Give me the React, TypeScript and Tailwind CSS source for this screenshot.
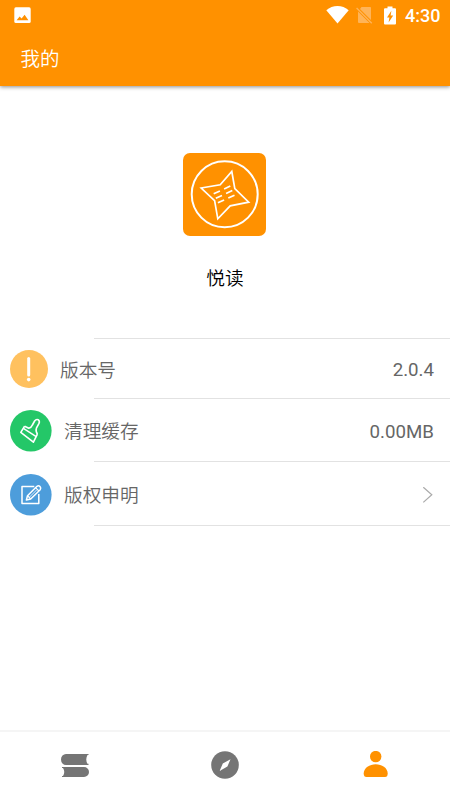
import type { ReactNode } from "react";

function StatusBar() {
  return (
    <div className="flex h-8 items-center pl-[14px] pr-[10px] text-white">
      <svg width="17" height="17" viewBox="0 0 17 17" className="mt-[-2px]">
        <rect x="0.3" y="0.3" width="16.4" height="15.7" rx="1.6" fill="#fff" />
        <path d="M2.6 13.2 5.6 9.4 7.6 11.6 10.6 7.8 14.4 13.2Z" fill="#ff9100" />
      </svg>
      <div className="ml-auto flex items-center">
        <svg width="23" height="19" viewBox="0 0 23 19" className="mt-[-3px]">
          <path d="M0.3 5.2C6.5-0.5 16.5-0.5 22.7 5.2L11.5 18.5Z" fill="#fff" />
        </svg>
        <svg width="17" height="18" viewBox="0 0 17 18" className="mt-[-2px] ml-[7px]">
          <path
            d="M5.5 1H14.2Q15 1 15 1.8V14L4 3ZM2 5.5 13.5 17H3Q2 17 2 16Z"
            fill="#ffb458"
          />
          <path d="M0.6 2 15.8 17.2" stroke="#ffb458" strokeWidth="1.3" />
        </svg>
        <svg width="12" height="19" viewBox="0 0 12 19" className="mt-[-2px] ml-[11px]">
          <path
            d="M3.5 0.5H8.5V2.3H11Q12 2.3 12 3.3V17.5Q12 18.5 11 18.5H1Q0 18.5 0 17.5V3.3Q0 2.3 1 2.3H3.5Z"
            fill="#fff"
          />
          <path d="M7.4 4.7 3 11.4H5.4L4.6 16.5 9.2 9.4H6.6Z" fill="#ff9100" />
        </svg>
        <span className="ml-[9px] w-[35px] whitespace-nowrap font-[Roboto] text-[18px] font-medium leading-none">
          4:30
        </span>
      </div>
    </div>
  );
}

function AppLogo() {
  return (
    <svg
      width="83"
      height="83"
      viewBox="0 0 83 83"
      fill="none"
      stroke="#fff"
      className="mr-px"
    >
      <rect width="83" height="83" rx="7" fill="#ff9100" stroke="none" />
      <circle cx="41.7" cy="41.3" r="33" strokeWidth="2" />
      <path
        d="M48.8 18.5 51.8 35.6 65.7 49.2 47.2 52.8 34.8 65.8 31.6 47.6 18.2 35 37.2 31.8Z"
        strokeWidth="1.7"
      />
      <path
        d="M30.7 40.8 36.9 37.9M32.8 45.3 39 42.4M34.9 49.8 41.1 46.9M41.1 36 47.3 33.1M43.1 40.5 49.3 37.6M45.3 45.1 51.5 42.2"
        strokeWidth="1.7"
      />
    </svg>
  );
}

function VersionIcon() {
  return (
    <svg width="38" height="38" viewBox="0 0 38 38">
      <circle cx="19" cy="19" r="19" fill="#ffc15f" />
      <path d="M18.7 8.5V25" stroke="#fff" strokeWidth="3" strokeLinecap="round" />
      <circle cx="18.7" cy="29.6" r="1.8" fill="#fff" />
    </svg>
  );
}

function CleanIcon() {
  return (
    <svg
      width="42"
      height="42"
      viewBox="0 0 42 42"
      fill="none"
      stroke="#fff"
      strokeWidth="1.6"
      strokeLinejoin="round"
      className="mt-[2px]"
    >
      <circle cx="20.8" cy="20.8" r="20.8" fill="#24c768" stroke="none" />
      <path d="M14.6 16.2 10.8 22.4 23.4 32.2 27.4 24.2" />
      <path d="M14.6 16.2 18.8 18.2Q21.4 17.6 22.4 15L24.6 11Q26.2 8.8 28.3 9.8 30 11 29 13.4L26.4 18.2Q25.4 20.6 27.4 24.2" />
      <path d="M13.4 18.4 26.2 26.6" strokeWidth="1.4" />
    </svg>
  );
}

function CopyrightIcon() {
  return (
    <svg
      width="42"
      height="42"
      viewBox="0 0 42 42"
      fill="none"
      stroke="#fff"
      strokeWidth="1.5"
      strokeLinejoin="round"
      className="mt-[2px]"
    >
      <circle cx="20.8" cy="20.8" r="20.8" fill="#4d9ddb" stroke="none" />
      <path d="M24.3 12.6H12V29.6H28.8V20" />
      <path d="M16.4 26 17.5 21.7 27 12.3Q28.6 11.2 30 12.6 31.4 14.2 30.2 15.7L20.7 25Z" />
      <path d="M25.6 13.7 28.9 17M17.5 21.7 20.7 25" strokeWidth="1.1" />
      <path d="M19.3 23.3 27 15.6" strokeWidth="0.8" />
    </svg>
  );
}

function Row({
  icon,
  label,
  className,
  children,
}: {
  icon: ReactNode;
  label: string;
  className: string;
  children: ReactNode;
}) {
  return (
    <div className={"flex flex-col " + className}>
      <div className="flex flex-1 items-center pl-[10px] pr-4 text-[18.7px] text-[#666]">
        {icon}
        <span className="mt-px ml-[12px] font-[350] leading-none">{label}</span>
        <span className="mt-[4px] ml-auto font-[Roboto] leading-none">{children}</span>
      </div>
      <div className="ml-[94px] h-px bg-[#e2e2e2]" />
    </div>
  );
}

export default function App() {
  return (
    <div className="flex h-[800px] w-[450px] flex-col overflow-hidden bg-white font-['Noto_Sans_CJK_SC',sans-serif]">
      <header className="h-[86px] bg-[#ff9100] shadow-[0_1px_4px_rgba(0,0,0,0.45)]">
        <StatusBar />
        <h1 className="pl-[20.5px] pt-4 text-[19.5px] font-[350] leading-5 text-white">
          我的
        </h1>
      </header>

      <main className="flex-1">
        <div className="flex h-[252px] flex-col items-center pt-[67px]">
          <AppLogo />
          <p className="mt-[31px] text-[18.7px] font-[350] leading-5 text-black">悦读</p>
        </div>
        <div className="ml-[94px] h-px bg-[#e2e2e2]" />
        <Row icon={<VersionIcon />} label="版本号" className="h-[60px]">
          2.0.4
        </Row>
        <Row icon={<CleanIcon />} label="清理缓存" className="h-[63px]">
          0.00MB
        </Row>
        <Row icon={<CopyrightIcon />} label="版权申明" className="h-16">
          <svg width="12" height="18" viewBox="0 0 12 18" fill="none">
            <path d="M1.3 0.2 9.8 7.8 1.3 15.4" stroke="#aaa" strokeWidth="1.2" />
          </svg>
        </Row>
      </main>

      <nav className="grid h-[70px] grid-cols-3 items-center justify-items-center border-t-2 border-[#f5f5f5] pb-[2px]">
        <svg width="30" height="28" viewBox="0 0 30 28" fill="#757575">
          <path d="M6 3H28.5V4.1H27.5Q25 8.5 27.5 12.8H28.5V14H6A5 5.5 0 0 1 6 3Z" />
          <path d="M2 16H24A5 5 0 0 1 24 26H2V25H3Q5.5 21 3 17H2Z" />
        </svg>
        <svg width="28" height="28" viewBox="0 0 28 28">
          <circle cx="14" cy="14" r="13.8" fill="#757575" />
          <path d="M19.5 8.2 16.4 15.6 8.6 20 11.8 12.4Z" fill="#fff" />
        </svg>
        <svg width="26" height="28" viewBox="0 0 26 28" fill="#ff9100" className="ml-[2px]">
          <circle cx="12.7" cy="5.6" r="5.7" />
          <path d="M0.7 22.5C0.7 17 6.7 13.3 12.7 13.3S24.7 17 24.7 22.5Q24.7 26 22 26H3.5Q0.7 26 0.7 22.5Z" />
        </svg>
      </nav>
    </div>
  );
}
